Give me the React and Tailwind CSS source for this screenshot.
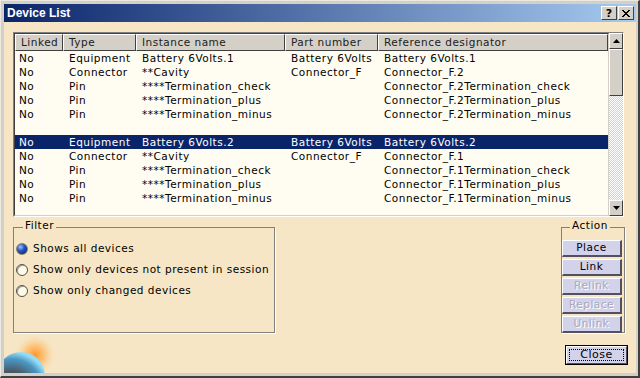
import React from "react";

const rows = [
  ["No", "Equipment", "Battery 6Volts.1", "Battery 6Volts", "Battery 6Volts.1"],
  ["No", "Connector", "**Cavity", "Connector_F", "Connector_F.2"],
  ["No", "Pin", "****Termination_check", "", "Connector_F.2Termination_check"],
  ["No", "Pin", "****Termination_plus", "", "Connector_F.2Termination_plus"],
  ["No", "Pin", "****Termination_minus", "", "Connector_F.2Termination_minus"],
  null,
  ["No", "Equipment", "Battery 6Volts.2", "Battery 6Volts", "Battery 6Volts.2"],
  ["No", "Connector", "**Cavity", "Connector_F", "Connector_F.1"],
  ["No", "Pin", "****Termination_check", "", "Connector_F.1Termination_check"],
  ["No", "Pin", "****Termination_plus", "", "Connector_F.1Termination_plus"],
  ["No", "Pin", "****Termination_minus", "", "Connector_F.1Termination_minus"],
];

const cols = "grid grid-cols-[48px_73px_149px_93px_230px]";

const Radio = ({ checked, label }) => (
  <div className="flex h-[21px] items-center gap-[5px]">
    {checked ? (
      <span className="h-[12px] w-[12px] rounded-full border border-[#8a8060] bg-[radial-gradient(circle_at_35%_30%,#9ec4ff_0%,#2458c8_40%,#0a1f6a_90%)]" />
    ) : (
      <span className="h-[12px] w-[12px] rounded-full border border-[#505050] bg-[#fffbe8] shadow-[inset_1px_1px_0_#a0a0a0]" />
    )}
    <span>{label}</span>
  </div>
);

const ActionButton = ({ children, disabled }) => (
  <div
    className={
      "flex h-[17px] w-[60px] items-center justify-center border-t border-l border-t-white border-l-white border-r-2 border-b-2 border-r-[#505060] border-b-[#505060] bg-[#d2d2ea] " +
      (disabled ? "text-[#a8a8bc] [text-shadow:1px_1px_0_#ffffff]" : "text-black")
    }
  >
    {children}
  </div>
);

export default function App() {
  return (
    <div className="h-[378px] w-[640px] overflow-hidden bg-[#d4d0c8] font-['DejaVu_Sans',sans-serif] text-[10.5px] tracking-[0.5px] text-black">
      <div className="flex h-full w-full flex-col border-t border-l border-t-[#ece9e0] border-l-[#ece9e0] border-r-2 border-b-2 border-r-[#404040] border-b-[#404040] p-[3px] pr-[2px]">
        {/* Title bar */}
        <div className="flex h-[18px] shrink-0 items-center justify-between bg-[linear-gradient(90deg,#0a246a,#a6caf0)] pl-[3px] pr-[2px]">
          <span className="font-['Liberation_Sans',sans-serif] text-[12px] font-bold tracking-normal text-white">Device List</span>
          <div className="flex gap-[1px]">
            <div className="flex h-[14px] w-[16px] items-center justify-center border-t border-l border-white border-r border-b border-r-[#404040] border-b-[#404040] bg-[#d4d0c8] text-[11px] font-bold leading-none tracking-normal">?</div>
            <div className="flex h-[14px] w-[16px] items-center justify-center border-t border-l border-white border-r border-b border-r-[#404040] border-b-[#404040] bg-[#d4d0c8]">
              <svg width="8" height="7" viewBox="0 0 8 7">
                <path d="M0 0L7 7M1 0L8 7M7 0L0 7M8 0L1 7" stroke="#000" strokeWidth="1" />
              </svg>
            </div>
          </div>
        </div>

        {/* Body */}
        <div className="relative flex flex-1 flex-col bg-[#f6e6c6] pl-[9px] pr-[11px] pt-[10px]">
          {/* Decorative globe */}
          <svg className="absolute bottom-0 left-0" width="60" height="44" viewBox="0 0 60 44">
            <defs>
              <radialGradient id="glow" cx="0.5" cy="0.5" r="0.5">
                <stop offset="0" stopColor="#ff9428" stopOpacity="1" />
                <stop offset="0.45" stopColor="#ffb860" stopOpacity="0.7" />
                <stop offset="1" stopColor="#f6e6c6" stopOpacity="0" />
              </radialGradient>
              <radialGradient id="planet" cx="0.3" cy="0.8" r="0.8">
                <stop offset="0" stopColor="#2a2e36" />
                <stop offset="0.5" stopColor="#4a5866" />
                <stop offset="0.82" stopColor="#4a98c4" />
                <stop offset="1" stopColor="#96dcf4" />
              </radialGradient>
            </defs>
            <circle cx="31" cy="26" r="22" fill="url(#glow)" />
            <circle cx="17" cy="47" r="24" fill="url(#planet)" />
          </svg>

          {/* Table */}
          <div className="relative flex h-[185px] w-[611px] border border-t-[#808080] border-l-[#808080] border-b-white border-r-white">
            <div className="flex flex-1 flex-col border border-t-[#404040] border-l-[#404040] border-b-[#d4d0c8] border-r-[#d4d0c8] bg-[#fffdf2]">
              <div className={cols + " h-[17px] shrink-0 text-[#202020]"}>
                {["Linked", "Type", "Instance name", "Part number", "Reference designator"].map((h) => (
                  <div key={h} className="flex items-center border-t border-l border-white border-r border-b border-r-[#404040] border-b-[#404040] bg-[#d4d0c8] pl-[5px] leading-none">
                    {h}
                  </div>
                ))}
              </div>
              {rows.map((r, i) =>
                r ? (
                  <div key={i} className={cols + " h-[14px] items-center " + (i === 6 ? "bg-[#0a246a] text-white" : "")}>
                    {r.map((c, j) => (
                      <div key={j} className={"whitespace-nowrap leading-none " + (j === 0 ? "pl-[4px]" : "pl-[6px]")}>
                        {c}
                      </div>
                    ))}
                  </div>
                ) : (
                  <div key={i} className="h-[14px]" />
                )
              )}
            </div>
            {/* Scrollbar */}
            <div className="flex w-[16px] flex-col bg-[#e8e6e0] bg-[repeating-conic-gradient(#d4d0c8_0_25%,#ffffff_0_50%)] bg-[length:2px_2px]">
              <div className="flex h-[16px] items-center justify-center border-t border-l border-white border-r border-b border-r-[#404040] border-b-[#404040] bg-[#d4d0c8]">
                <svg width="7" height="4" viewBox="0 0 7 4"><path d="M3.5 0L7 4H0Z" fill="#000" /></svg>
              </div>
              <div className="h-[47px] border-t border-l border-white border-r border-b border-r-[#404040] border-b-[#404040] bg-[#d4d0c8]" />
              <div className="flex-1" />
              <div className="flex h-[16px] items-center justify-center border-t border-l border-white border-r border-b border-r-[#404040] border-b-[#404040] bg-[#d4d0c8]">
                <svg width="7" height="4" viewBox="0 0 7 4"><path d="M0 0H7L3.5 4Z" fill="#000" /></svg>
              </div>
            </div>
          </div>

          {/* Lower area */}
          <div className="relative mt-[10px] flex justify-between">
            <div className="relative h-[106px] w-[262px] border border-[#808080] shadow-[1px_1px_0_#ffffff]">
              <span className="absolute -top-[8px] left-[9px] bg-[#f6e6c6] px-[2px] leading-none">Filter</span>
              <div className="flex flex-col pl-[2px] pt-[10px]">
                <Radio checked label="Shows all devices" />
                <Radio label="Show only devices not present in session" />
                <Radio label="Show only changed devices" />
              </div>
            </div>

            <div className="flex flex-col items-end">
              <div className="relative flex h-[106px] w-[64px] flex-col items-start gap-[2px] border border-[#808080] pt-[12px] shadow-[1px_1px_0_#ffffff]">
                <span className="absolute -top-[8px] left-[8px] bg-[#f6e6c6] px-[2px] leading-none">Action</span>
                <ActionButton>Place</ActionButton>
                <ActionButton>Link</ActionButton>
                <ActionButton disabled>Relink</ActionButton>
                <ActionButton disabled>Replace</ActionButton>
                <ActionButton disabled>Unlink</ActionButton>
              </div>
              <div className="mt-[12px] mr-[-3px] border border-black">
                <div className="flex h-[18px] w-[61px] items-center justify-center border-t border-l border-white border-r border-b border-r-[#505060] border-b-[#505060] bg-[#d2d2ea] p-[2px]">
                  <div className="flex h-full w-full items-center justify-center border border-dotted border-black text-[11px]">Close</div>
                </div>
              </div>
            </div>
          </div>
        </div>
      </div>
    </div>
  );
}
